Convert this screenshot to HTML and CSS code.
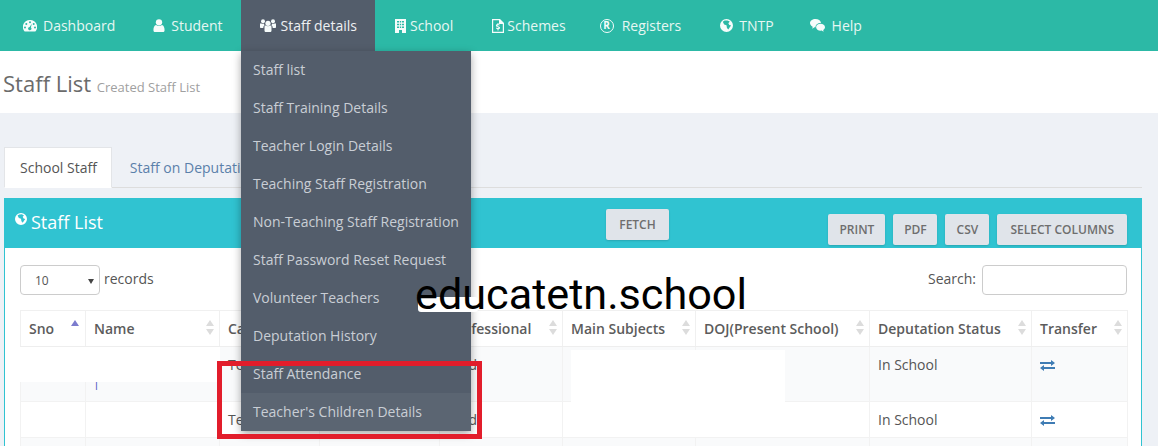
FILE: index.html
```html
<!DOCTYPE html>
<html lang="en">
<head>
<meta charset="utf-8">
<title>Staff List</title>
<link rel="stylesheet" href="styles.css">
</head>
<body>
<svg class="sprites" width="0" height="0" aria-hidden="true">
  <symbol id="i-globe" viewBox="0 0 14 14"><path fill-rule="evenodd" d="M7 0a7 7 0 1 1 0 14A7 7 0 0 1 7 0zM3 3l1.500 2.800 2.500 1 .5 2.800 1.500 1.800 1.500-2.500 1.500-2-2-.5-1-1.900 1.500-1.700L8 1.500 5 1.700z"/></symbol>
  <symbol id="i-exchange" viewBox="0 0 15 11"><path d="M0 2h11V0l4 3-4 3V4H0zM15 7H4V5L0 8l4 3V9h11z"/></symbol>
</svg>

<nav class="topnav">
  <a class="nav-item"><svg class="ic ic-dash" viewBox="0 0 14 12"><path fill-rule="evenodd" d="M7 0a7 7 0 0 1 6 10.800l-.7.700H1.700l-.7-.700A7 7 0 0 1 7 0zM7 1.300a1 1 0 1 0 0 2 1 1 0 0 0 0-2zM3.300 3a1 1 0 1 0 0 2 1 1 0 0 0 0-2zM10.700 3a1 1 0 1 0 0 2 1 1 0 0 0 0-2zM2 6.500a1 1 0 1 0 0 2 1 1 0 0 0 0-2zM12 6.500a1 1 0 1 0 0 2 1 1 0 0 0 0-2zM8.800 3.800 6.600 7a1.600 1.600 0 1 0 1.300.5z"/></svg>Dashboard</a>
  <a class="nav-item nav-student"><svg class="ic ic-user" viewBox="0 0 12 14"><circle cx="6" cy="3.600" r="3.400"/><path d="M2.800 6.500C4.500 8 7.500 8 9.200 6.500 11 7 12 9 12 12c0 1.300-.8 2-2 2H2c-1.200 0-2-.7-2-2 0-3 1-5 2.800-5.500z"/></svg>Student</a>
  <a class="nav-item nav-active"><svg class="ic ic-users" viewBox="0 0 16 13"><circle cx="8" cy="4.300" r="2.600"/><circle cx="3" cy="2.300" r="2"/><circle cx="13" cy="2.300" r="2"/><path d="M4.500 8c0-1 .6-1.500 1.300-1.500 1.300 1 3.100 1 4.400 0 .7 0 1.300.5 1.300 1.500v3.500c0 1-.7 1.500-1.500 1.500H6c-.8 0-1.500-.5-1.500-1.500zM0 5.500c0-.8.500-1.300 1-1.300.9.700 2 .7 2.800.4.100.8.500 1.300.9 1.700C3.700 6.700 3.300 7.600 3.300 9H1c-.6 0-1-.4-1-1.100zM16 5.500c0-.8-.5-1.300-1-1.300-.9.700-2 .7-2.800.4-.1.800-.5 1.300-.9 1.700 1 .4 1.400 1.300 1.400 2.700H15c.6 0 1-.4 1-1.100z"/></svg>Staff details</a>
  <a class="nav-item nav-school"><svg class="ic ic-building" viewBox="0 0 11 14"><path fill-rule="evenodd" d="M0 0h11v14H0zM2 2v1.500h2V2zM4.800 2v1.500h1.400V2zM7 2v1.500h2V2zM2 4.700v1.500h2V4.700zM4.800 4.700v1.500h1.400V4.700zM7 4.700v1.500h2V4.700zM2 7.400v1.500h2V7.400zM4.800 7.400v1.500h1.400V7.400zM7 7.400v1.500h2V7.400zM4 11v3h3v-3z"/></svg>School</a>
  <a class="nav-item nav-schemes"><svg class="ic ic-scheme" viewBox="0 0 12 14"><path fill-rule="evenodd" d="M0 0h8l4 4v10H0zM1.200 1.200v11.600h9.600V5H7V1.200zM5.500 4h1v1.200c.8.100 1.200.4 1.400.7l-.7.700c-.5-.4-1.700-.5-1.700.1 0 .8 2.600.4 2.600 2.100 0 .8-.6 1.300-1.600 1.400V11.500h-1v-1.300c-.8-.1-1.400-.5-1.600-.9l.7-.7c.6.600 1.900.7 1.900 0 0-.8-2.600-.4-2.600-2.100 0-.8.700-1.300 1.600-1.400z"/></svg>Schemes</a>
  <a class="nav-item nav-registers"><span class="reg-mark">R</span>Registers</a>
  <a class="nav-item"><svg class="ic ic-globe"><use href="#i-globe"/></svg>TNTP</a>
  <a class="nav-item nav-help"><svg class="ic ic-chat" viewBox="0 0 15 13"><path d="M5.500 0C8.400 0 10.700 1.600 11 3.900 8 3.700 5.400 5.500 5.500 8.300H4.500L2.300 9.700l.4-2C1 6.900 0 5.500 0 4 0 1.800 2.400 0 5.500 0z"/><path d="M10.500 4.800c2.500 0 4.500 1.500 4.500 3.400 0 1.100-.7 2.100-1.800 2.800l.4 1.800-2-1.200c-3 .4-5.500-1.200-5.500-3.400 0-1.900 1.900-3.400 4.400-3.400z"/></svg>Help</a>
</nav>

<header class="page-head">
  <h1 class="page-title">Staff List <small class="page-sub">Created Staff List</small></h1>
</header>

<main class="content">
  <div class="tabs">
    <a class="tab tab-active">School Staff</a>
    <a class="tab">Staff on Deputation</a>
  </div>

  <section class="panel">
    <div class="panel-head">
      <h2 class="panel-title"><svg class="ic-panel"><use href="#i-globe"/></svg>Staff List</h2>
      <button class="btn btn-fetch">FETCH</button>
      <div class="btn-group">
        <button class="btn btn-print">PRINT</button>
        <button class="btn btn-short">PDF</button>
        <button class="btn btn-short">CSV</button>
        <button class="btn">SELECT COLUMNS</button>
      </div>
    </div>
    <div class="panel-body">
      <div class="controls">
        <label class="records"><span class="select">10<i class="caret"></i></span>records</label>
        <label class="search">Search:<span class="search-box"></span></label>
      </div>
      <div class="table-wrap">
        <table class="grid">
          <colgroup>
            <col class="c1"><col class="c2"><col class="c3"><col class="c4"><col class="c5"><col class="c6"><col class="c7"><col class="c8"><col class="c9">
          </colgroup>
          <thead>
            <tr>
              <th class="sort-asc">Sno</th>
              <th>Name</th>
              <th>Category</th>
              <th>Designation</th>
              <th>Professional</th>
              <th>Main Subjects</th>
              <th>DOJ(Present School)</th>
              <th>Deputation Status</th>
              <th>Transfer</th>
            </tr>
          </thead>
          <tbody>
            <tr class="row-first">
              <td></td><td><span class="tick">I</span></td><td>Teacher</td><td></td><td>B.Ed.</td><td><span class="mark">:</span></td><td></td><td>In School</td>
              <td><svg class="ic-exchange"><use href="#i-exchange"/></svg></td>
            </tr>
            <tr class="row-even">
              <td></td><td></td><td>Teacher</td><td></td><td>B.Ed</td><td></td><td></td><td>In School</td>
              <td><svg class="ic-exchange"><use href="#i-exchange"/></svg></td>
            </tr>
            <tr class="row-first">
              <td></td><td></td><td></td><td></td><td></td><td></td><td></td><td></td><td></td>
            </tr>
          </tbody>
        </table>
        <div class="patch patch-a"></div>
        <div class="patch patch-b"></div>
        <div class="patch patch-c"></div>
      </div>
    </div>
  </section>
</main>

<ul class="dropdown">
  <li>Staff list</li>
  <li>Staff Training Details</li>
  <li>Teacher Login Details</li>
  <li>Teaching Staff Registration</li>
  <li>Non-Teaching Staff Registration</li>
  <li>Staff Password Reset Request</li>
  <li>Volunteer Teachers</li>
  <li>Deputation History</li>
  <li>Staff Attendance</li>
  <li class="dd-hover">Teacher's Children Details</li>
</ul>

<div class="watermark">educatetn.school</div>
<div class="red-box"></div>
</body>
</html>
```

FILE: styles.css
```css
* { box-sizing: border-box; }
html, body { margin: 0; padding: 0; }
body {
  position: relative;
  width: 1158px;
  height: 446px;
  overflow: hidden;
  background: #eef1f6;
  font-family: "Open Sans", "Liberation Sans", sans-serif;
  font-size: 14px;
  color: #555;
}
.sprites { position: absolute; }

/* top navigation */
.topnav {
  display: flex;
  height: 51px;
  padding-left: 4px;
  background: #2cb9a6;
}
.nav-item {
  display: flex;
  align-items: center;
  gap: 6px;
  padding: 0 19px;
  color: #e6f7f3;
  white-space: nowrap;
}
.nav-student { padding-right: 18px; }
.nav-active { gap: 5px; padding-right: 18px; background: #535d6b; color: #eef0f2; }
.nav-school { gap: 4px; padding: 0 20px; }
.nav-schemes { gap: 3px; }
.nav-registers { gap: 8px; padding: 0 20px 0 15px; }
.nav-help { gap: 7px; padding-left: 17px; }
.ic { fill: #f6fcfb; flex: none; }
.ic-dash { width: 14px; height: 12px; }
.ic-user { width: 12px; height: 13px; }
.ic-users { width: 16px; height: 13px; }
.ic-building { width: 11px; height: 14px; }
.ic-scheme { width: 12px; height: 14px; }
.ic-globe { width: 13px; height: 13px; }
.ic-chat { width: 15px; height: 13px; }
.reg-mark {
  width: 14px;
  height: 14px;
  border: 1.500px solid #f6fcfb;
  border-radius: 50%;
  font-size: 10px;
  font-weight: 700;
  line-height: 11px;
  text-align: center;
  color: #f6fcfb;
}

/* page heading */
.page-head {
  height: 62px;
  padding: 15px 0 0 3px;
  background: #fff;
}
.page-title {
  margin: 0;
  font-size: 22px;
  font-weight: 400;
  line-height: 34px;
  color: #6b6b6b;
}
.page-sub { font-size: 13px; color: #a0a0a0; }

/* tabs */
.content { padding: 34px 16px 0 4px; }
.tabs {
  display: flex;
  height: 41px;
  border-bottom: 1px solid #ddd;
}
.tab {
  padding: 0 14px;
  line-height: 40px;
  margin-right: 4px;
  color: #5b80aa;
  border: 1px solid transparent;
}
.tab-active {
  height: 41px;
  padding: 0 14px 0 15px;
  margin-right: 3px;
  background: #fff;
  color: #555;
  border-color: #e3e5e8 #e3e5e8 #fff;
}

/* panel */
.panel {
  margin-top: 10px;
  background: #fff;
  border: 1px solid #30c3d1;
  border-top: 0;
}
.panel-head {
  display: flex;
  align-items: flex-start;
  height: 50px;
  background: #30c3d1;
}
.panel-title {
  display: flex;
  align-items: center;
  gap: 4px;
  width: 601px;
  flex: none;
  margin: 0;
  padding: 12px 0 0 10px;
  font-size: 18px;
  font-weight: 400;
  line-height: 24px;
  color: #fff;
}
.ic-panel { width: 12px; height: 12px; margin-top: -6px; fill: #fff; }
.btn {
  height: 31px;
  padding: 0 13px;
  border: 0;
  border-radius: 2px;
  background: #e0e4ea;
  font-family: inherit;
  font-size: 12px;
  font-weight: 600;
  color: #6e6e6e;
  box-shadow: 0 1px 2px rgba(0, 0, 0, .15);
}
.btn-fetch { width: 63px; padding: 0; margin-top: 11px; }
.btn-print { width: 57px; padding: 0; }
.btn-short { width: 44px; padding: 0; }
.btn-group {
  display: flex;
  gap: 8px;
  margin: 16px 14px 0 auto;
}

/* table controls */
.panel-body { padding: 17px 14px 0 15px; }
.controls {
  display: flex;
  justify-content: space-between;
  height: 45px;
}
.records, .search {
  display: flex;
  align-items: flex-start;
  gap: 4px;
  line-height: 28px;
}
.search { gap: 6px; }
.select {
  position: relative;
  width: 80px;
  height: 30px;
  padding-left: 14px;
  border: 1px solid #ccc;
  border-radius: 4px;
  font-size: 12px;
  line-height: 30px;
  background: #fff;
}
.caret {
  position: absolute;
  right: 5px;
  top: 13px;
  border: 3.500px solid transparent;
  border-top: 5px solid #444;
  border-bottom: 0;
}
.search-box {
  width: 145px;
  height: 30px;
  border: 1px solid #ccc;
  border-radius: 4px;
}

/* grid */
.table-wrap { position: relative; }
.grid {
  width: 1107px;
  table-layout: fixed;
  border-collapse: collapse;
  background: #fff;
}
.c1 { width: 65px; } .c2 { width: 134px; } .c3 { width: 100px; }
.c4 { width: 120px; } .c5 { width: 123px; } .c6 { width: 133px; }
.c7 { width: 174px; } .c8 { width: 162px; } .c9 { width: 96px; }
.grid th {
  position: relative;
  height: 36px;
  padding: 0 8px;
  border: 1px solid #f0f0f0;
  border-bottom: 1px solid #eee;
  font-weight: 600;
  color: #5c5c5c;
  text-align: left;
  white-space: nowrap;
  overflow: hidden;
}
.grid th::before, .grid th::after {
  content: "";
  position: absolute;
  right: 5px;
  border: 4px solid transparent;
}
.grid th::before { top: 9px; border-bottom: 6px solid #dcdcdc; border-top: 0; }
.grid th::after { top: 18px; border-top: 6px solid #dcdcdc; border-bottom: 0; }
.grid th.sort-asc::before { border-bottom-color: #7c7cce; right: 6px; }
.grid th.sort-asc::after { display: none; }
.grid td {
  height: 36px;
  padding: 8px 8px 0;
  border: 1px solid #f2f2f2;
  vertical-align: top;
  line-height: 20px;
}
.row-first { background: #f9fafb; }
.row-first td { height: 55px; }
.row-even { background: #fff; }
.tick { position: relative; left: 1px; top: 20px; font-size: 10px; color: #4a55c0; }
.mark { color: #e2a860; }
.ic-exchange { width: 15px; height: 11px; margin-top: 5px; fill: #3f7cb4; display: block; }

/* white cover-ups painted over the list */
.patch { position: absolute; background: #fff; }
.patch-a { left: 551px; top: 40px; width: 214px; height: 52px; }
.patch-b { left: 555px; top: 92px; width: 210px; height: 35px; }
.patch-c { left: 0; top: 37px; width: 200px; height: 35px; }

/* menu overlay */
.dropdown {
  position: absolute;
  left: 241px;
  top: 51px;
  width: 230px;
  margin: 0;
  padding: 0;
  list-style: none;
  background: #535d6b;
  border-radius: 0 0 3px 3px;
  box-shadow: 0 3px 8px rgba(0, 0, 0, .35);
}
.dropdown li {
  height: 38px;
  padding-left: 12px;
  line-height: 37px;
  color: #c9ced5;
  white-space: nowrap;
}
.dropdown .dd-hover { background: #5b6572; }

/* pasted-on watermark and annotation */
.watermark {
  position: absolute;
  z-index: 1;
  left: 415px;
  top: 265px;
  font-family: Roboto, "Liberation Sans", sans-serif;
  font-size: 43.200px;
  line-height: 60px;
  color: #000;
}
.watermark::before {
  content: "";
  position: absolute;
  z-index: -1;
  left: 3px;
  top: 32px;
  width: 60px;
  height: 15px;
  border-radius: 3px;
  background: #fff;
}
.red-box {
  position: absolute;
  left: 217px;
  top: 361px;
  width: 265px;
  height: 78px;
  border: 5px solid #e21d2b;
}
```
